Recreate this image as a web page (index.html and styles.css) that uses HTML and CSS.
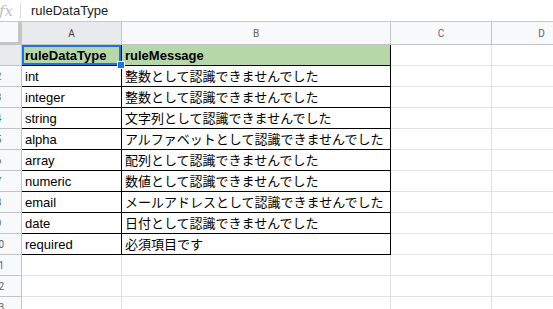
FILE: index.html
```html
<!DOCTYPE html>
<html lang="ja">
<head>
  <meta charset="UTF-8">
  <title>ruleDataType - Sheet</title>
  <link rel="stylesheet" href="styles.css">
</head>
<body>

  <div class="sheet">
    <div class="formula-bar">
      <span class="fx">fx</span>
      <span class="divider"></span>
      <span class="formula">ruleDataType</span>
    </div>

    <div class="grid" id="grid">
      <div class="corner"></div>
      <div class="col-head active">A</div>
      <div class="col-head">B</div>
      <div class="col-head">C</div>
      <div class="col-head">D</div>
    </div>
  </div>

  <script>
    const rows = [
      ["ruleDataType", "ruleMessage"],
      ["int", "整数として認識できませんでした"],
      ["integer", "整数として認識できませんでした"],
      ["string", "文字列として認識できませんでした"],
      ["alpha", "アルファベットとして認識できませんでした"],
      ["array", "配列として認識できませんでした"],
      ["numeric", "数値として認識できませんでした"],
      ["email", "メールアドレスとして認識できませんでした"],
      ["date", "日付として認識できませんでした"],
      ["required", "必須項目です"],
      ["", ""],
      ["", ""],
      ["", ""]
    ];

    function makeCell(text, classes) {
      const cell = document.createElement("div");
      cell.className = classes;
      cell.textContent = text;
      return cell;
    }

    const grid = document.getElementById("grid");
    rows.forEach((row, i) => {
      const inTable = i < 10;
      const isHead = i === 0;
      grid.appendChild(makeCell(i + 1, "row-head" + (isHead ? " active" : "")));

      let cls = "cell";
      if (inTable) cls += " boxed";
      if (isHead) cls += " table-head";

      const a = makeCell(row[0], cls + " col-a");
      if (isHead) {
        const handle = document.createElement("span");
        handle.className = "handle";
        a.classList.add("selected");
        a.appendChild(handle);
      }
      grid.appendChild(a);
      grid.appendChild(makeCell(row[1], cls + " col-b"));
      grid.appendChild(makeCell("", "cell"));
      grid.appendChild(makeCell("", "cell"));
    });
  </script>

</body>
</html>
```

FILE: styles.css
```css
body {
  margin: 0;
  padding: 0;
  background: #fff;
  font-family: "Liberation Sans", Arial, sans-serif;
  overflow: hidden;
}

.sheet {
  margin-left: -24px;
}

.formula-bar {
  height: 21px;
  border-bottom: 1px solid #c7c7c7;
  display: flex;
  align-items: center;
}

.fx {
  width: 44px;
  box-sizing: border-box;
  padding-right: 7px;
  text-align: right;
  font-family: "DejaVu Serif", serif;
  font-style: italic;
  font-size: 15px;
  color: #bdc1c6;
}

.divider {
  width: 1px;
  height: 15px;
  background: #dadce0;
  margin-right: 10px;
}

.formula {
  font-size: 13px;
  color: #202124;
  padding-bottom: 1px;
}

.grid {
  display: grid;
  grid-template-columns: 46px 100px 269px 101px 100px;
  grid-template-rows: 23px;
  grid-auto-rows: 21px;
}

.corner {
  background: #f8f9fa;
  border-right: 4px solid #c4c4c4;
  border-bottom: 3px solid #c4c4c4;
}

.col-head {
  background: #f8f9fa;
  border-right: 1px solid #c4c4c4;
  border-bottom: 1px solid #c4c4c4;
  font-family: Roboto, "Liberation Sans", sans-serif;
  font-size: 10px;
  color: #5f6368;
  display: flex;
  justify-content: center;
  align-items: center;
}

.row-head {
  background: #f8f9fa;
  border-right: 1px solid #c4c4c4;
  border-bottom: 1px solid #c4c4c4;
  font-family: Roboto, "Liberation Sans", sans-serif;
  font-size: 10px;
  color: #5f6368;
  display: flex;
  justify-content: center;
  align-items: center;
}

.col-head.active,
.row-head.active {
  background: #e8eaed;
  color: #3c4043;
}

.cell {
  position: relative;
  border-right: 1px solid #e2e2e2;
  border-bottom: 1px solid #e2e2e2;
  padding: 0 3px;
  font-size: 13px;
  line-height: 21px;
  color: #000;
  white-space: nowrap;
}

.col-b {
  font-family: "Liberation Sans", "Noto Sans CJK JP", sans-serif;
}

.cell.boxed {
  border-right-color: #000;
  border-bottom-color: #000;
}

.cell.table-head {
  background: #b6d7a8;
  font-weight: bold;
}

.cell.selected {
  box-shadow: inset 0 0 0 2px #1a73e8;
}

.handle {
  position: absolute;
  right: -4px;
  bottom: -4px;
  width: 6px;
  height: 6px;
  background: #1a73e8;
  border: 1px solid #fff;
  z-index: 2;
}
```
